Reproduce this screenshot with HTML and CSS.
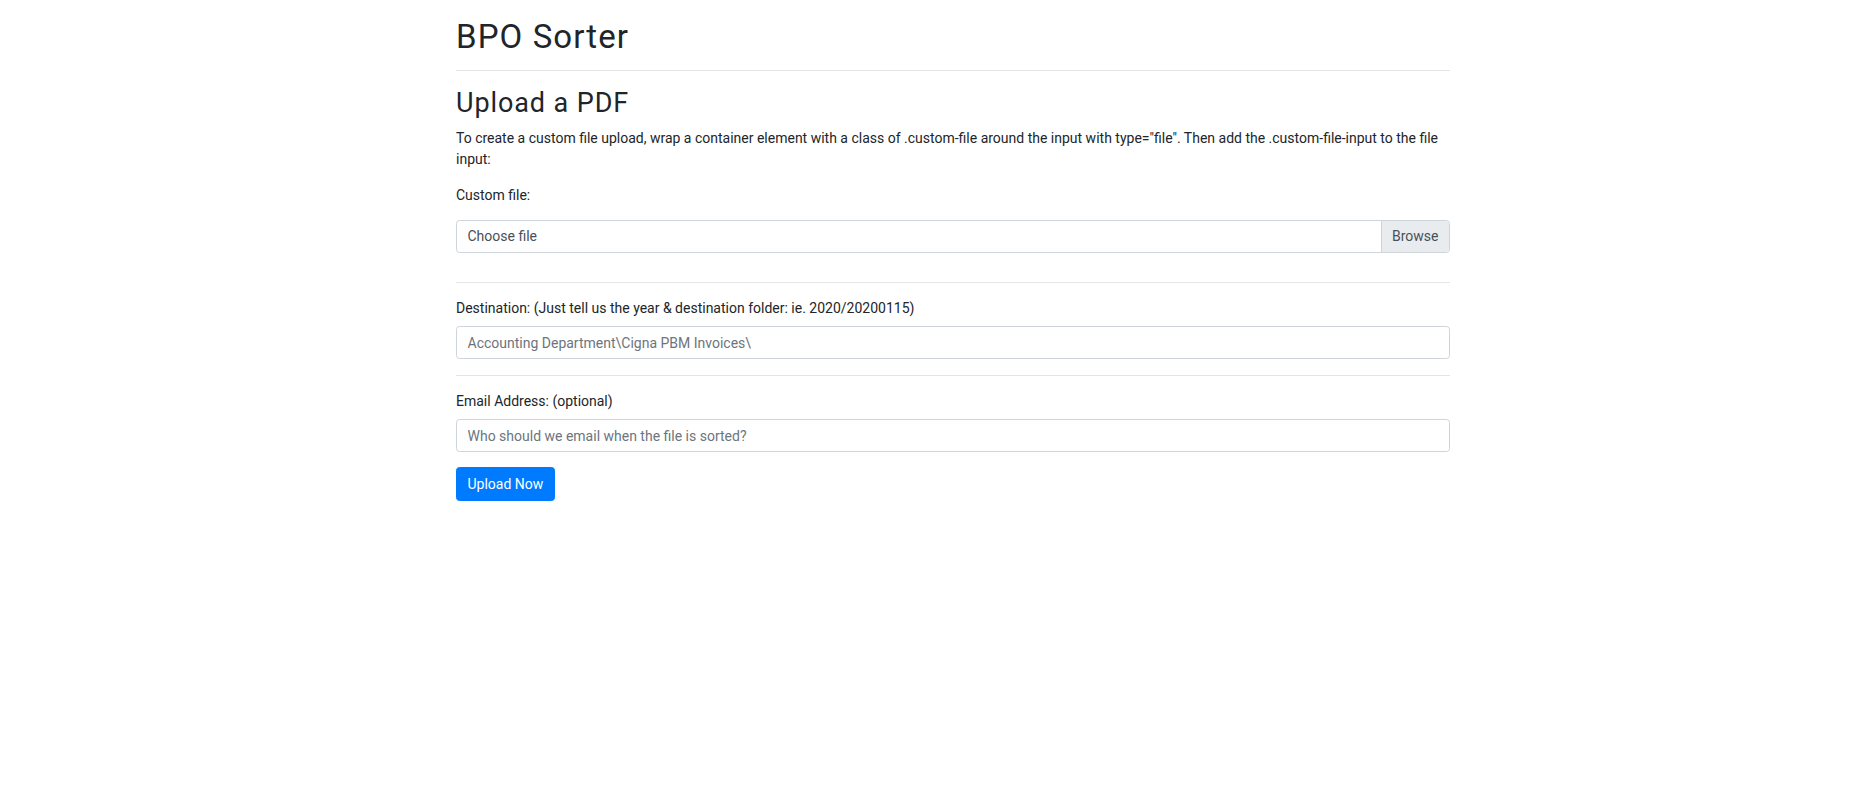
FILE: index.html
```html
<!DOCTYPE html>
<html lang="en">
<head>
<meta charset="utf-8">
<title>BPO Sorter</title>
<link rel="stylesheet" href="styles.css">
</head>
<body>
<div class="container">
  <h1 class="title">BPO Sorter</h1>
  <hr class="rule rule-top">
  <h2 class="subtitle">Upload a PDF</h2>
  <p class="intro">To create a custom file upload, wrap a container element with a class of .custom-file around the input with type="file". Then add the .custom-file-input to the file input:</p>
  <form class="upload-form">
    <div class="field field-file">
      <label class="field-label">Custom file:</label>
      <div class="custom-file">
        <span class="custom-file-text">Choose file</span>
        <span class="custom-file-browse">Browse</span>
      </div>
    </div>
    <hr class="rule rule-file">
    <div class="field">
      <label class="field-label" for="dest">Destination: (Just tell us the year &amp; destination folder: ie. 2020/20200115)</label>
      <input class="text-input" id="dest" type="text" placeholder="Accounting Department\Cigna PBM Invoices\">
    </div>
    <hr class="rule rule-dest">
    <div class="field field-email">
      <label class="field-label" for="email">Email Address: (optional)</label>
      <input class="text-input" id="email" type="text" placeholder="Who should we email when the file is sorted?">
    </div>
    <button class="btn-primary" type="button">Upload Now</button>
  </form>
</div>
</body>
</html>
```
FILE: styles.css
```css
* { box-sizing: border-box; }
html, body { margin: 0; padding: 0; background: #fff; }
body {
  font-family: Roboto, "Liberation Sans", sans-serif;
  font-size: 14px;
  line-height: 21px;
  color: #212529;
}
.container {
  width: 994px;
  margin-left: 456px;
  padding-top: 17px;
}
.title {
  margin: 0;
  font-size: 33px;
  line-height: 40px;
  font-weight: 400;
  letter-spacing: 1.1px;
}
.rule {
  margin: 0;
  border: 0;
  border-top: 1px solid rgba(0,0,0,.1);
  height: 0;
}
.rule-top { margin-top: 13px; }
.subtitle {
  margin: 15px 0 0;
  font-size: 27px;
  line-height: 34px;
  font-weight: 400;
  letter-spacing: 0.9px;
}
.intro { margin: 8px 0 0; }
.upload-form { margin-top: 15px; }
.field { display: flex; flex-direction: column; }
.field-label { display: block; margin-bottom: 7px; }
.field-file .field-label { margin-bottom: 14px; }
.custom-file {
  display: flex;
  height: 33px;
  border: 1px solid #ced4da;
  border-radius: 3.5px;
  overflow: hidden;
  color: #495057;
}
.custom-file-text { flex: 1; padding: 5px 10.5px; }
.custom-file-browse {
  padding: 5px 10.5px;
  background: #e9ecef;
  border-left: 1px solid #ced4da;
}
.rule-file { margin-top: 29px; }
.rule-dest { margin-top: 16px; }
.rule + .field { margin-top: 15px; }
.text-input {
  height: 33px;
  padding: 5px 10.5px;
  border: 1px solid #ced4da;
  border-radius: 3.5px;
  font: inherit;
  color: #495057;
  outline: none;
}
.text-input::placeholder { color: #6c757d; opacity: 1; }
.btn-primary {
  display: block;
  margin-top: 15px;
  height: 34px;
  padding: 0 10.5px;
  font: inherit;
  color: #fff;
  background: #007bff;
  border: 1px solid #007bff;
  border-radius: 3.5px;
}
```
